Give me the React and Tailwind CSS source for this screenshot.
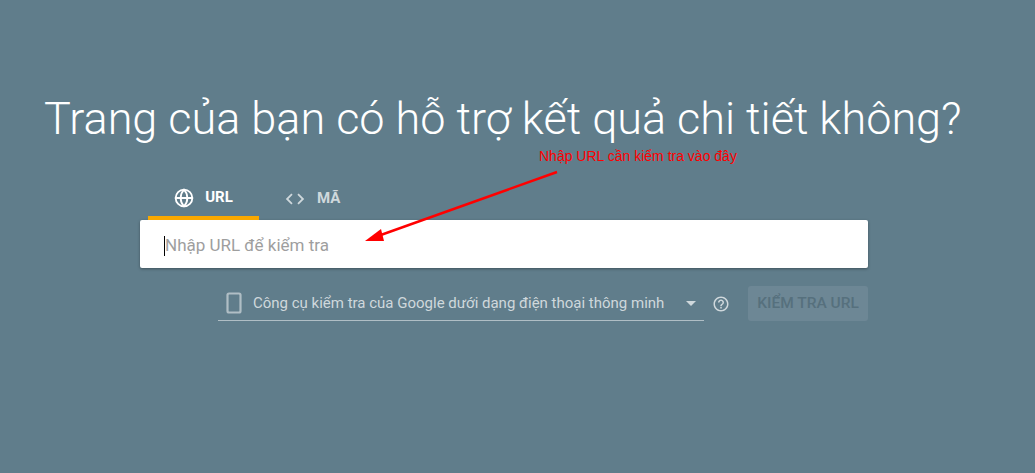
import { Globe } from "lucide-react";

const roboto = { fontFamily: "Roboto, 'Liberation Sans', sans-serif" };

function CodeIcon() {
  return (
    <svg width="22" height="22" viewBox="0 0 24 24" className="text-[#cfd8dc]">
      <path d="M9.4 16.6 4.8 12l4.6-4.6L8 6l-6 6 6 6 1.4-1.4zm5.2 0 4.6-4.6-4.6-4.6L16 6l6 6-6 6-1.4-1.4z" fill="currentColor" />
    </svg>
  );
}

function PhoneIcon() {
  return (
    <svg width="16" height="22" viewBox="0 0 16 22">
      <rect x="1.5" y="1.5" width="13" height="19" rx="1.5" fill="none" stroke="#b0bec5" strokeWidth="2.2" />
    </svg>
  );
}

function HelpIcon() {
  return (
    <svg width="18" height="18" viewBox="0 0 24 24" fill="#cfd8dc">
      <path d="M11 18h2v-2h-2v2zm1-16C6.48 2 2 6.48 2 12s4.48 10 10 10 10-4.48 10-10S17.52 2 12 2zm0 18c-4.41 0-8-3.59-8-8s3.59-8 8-8 8 3.59 8 8-3.59 8-8 8zm0-14c-2.21 0-4 1.79-4 4h2c0-1.1.9-2 2-2s2 .9 2 2c0 2-3 1.75-3 5h2c0-2.25 3-2.5 3-5 0-2.21-1.79-4-4-4z" />
    </svg>
  );
}

export default function App() {
  return (
    <div className="relative h-[473px] w-[1035px] overflow-hidden bg-[#607d8b]" style={roboto}>
      <h1 className="pl-[44px] pt-[89px] text-[45px] font-light leading-[60px] text-white">
        Trang của bạn có hỗ trợ kết quả chi tiết không?
      </h1>

      <div className="ml-[140px] mt-[27px] w-[728px]">
        <div className="flex pl-[8px]">
          <div className="flex h-[44px] w-[111px] items-center justify-center gap-[11px] border-b-4 border-[#f9a800] pt-[3px] text-white">
            <Globe size={20} strokeWidth={2.2} />
            <span className="text-[15px] font-bold">URL</span>
          </div>
          <div className="flex h-[44px] items-center gap-[11px] pl-[25px] pt-[1px] text-[#cfd8dc]">
            <CodeIcon />
            <span className="text-[15px] font-bold">MÃ</span>
          </div>
        </div>

        <div className="flex h-[48px] items-center rounded-[2px] bg-white pl-[24px] pt-[3px] shadow-[0_1px_3px_rgba(0,0,0,0.35)]">
          <span className="h-[20px] w-px bg-black" />
          <span className="text-[17px] text-[#9e9e9e]">Nhập URL để kiểm tra</span>
        </div>

        <div className="mt-[18px] flex items-center pl-[78px]">
          <div className="flex h-[35px] w-[486px] items-center border-b border-[#b0bec5] pl-[8px] pr-[8px]">
            <PhoneIcon />
            <span className="ml-[11px] flex-1 text-[15px] text-[#cfd8dc]">
              Công cụ kiểm tra của Google dưới dạng điện thoại thông minh
            </span>
            <span className="h-0 w-0 border-x-[5px] border-t-[5px] border-x-transparent border-t-[#cfd8dc]" />
          </div>
          <div className="ml-[8px] flex w-[18px] items-center">
            <HelpIcon />
          </div>
          <button className="ml-[18px] h-[35px] w-[120px] rounded-[3px] bg-[#6d8795] text-[15.5px] font-medium text-[#56707d]">
            KIỂM TRA URL
          </button>
        </div>
      </div>

      <div
        className="absolute left-[539px] top-[146px] text-[14px] text-[#ff0000]"
        style={{ fontFamily: "'Liberation Sans', Arial, sans-serif" }}
      >
        Nhập URL cần kiểm tra vào đây
      </div>
      <svg className="absolute left-0 top-0" width="1035" height="473">
        <line x1="557" y1="172" x2="378" y2="236" stroke="#ff0000" strokeWidth="2.5" />
        <polygon points="365,241 381,229 384,241" fill="#ff0000" />
      </svg>
    </div>
  );
}
